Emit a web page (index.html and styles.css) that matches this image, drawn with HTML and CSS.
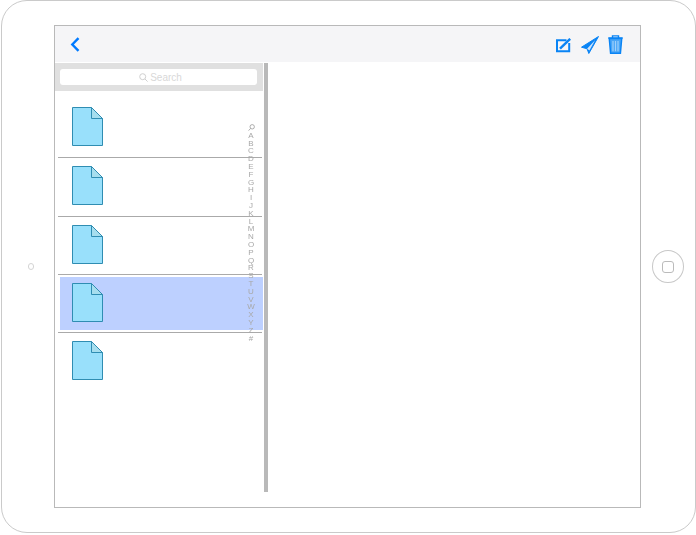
FILE: index.html
```html
<!DOCTYPE html>
<html lang="en">
<head>
<meta charset="utf-8">
<title>Notes</title>
<link rel="stylesheet" href="styles.css">
</head>
<body>
<svg class="sprite" aria-hidden="true">
  <symbol id="file" viewBox="0 0 31 39">
    <path class="file-body" d="M.5.5H19.5L30.5 11.5V38.5H.5Z"/>
    <path class="file-fold" d="M19.5 .5V11.5H30.5Z"/>
  </symbol>
</svg>
<div class="device">
  <div class="bezel-left"><span class="camera"></span></div>
  <main class="screen">
    <header class="toolbar">
      <svg class="icon-back" width="10" height="15" viewBox="0 0 10 15"><path d="M8.5 1.2 2.3 7.5l6.2 6.3"/></svg>
      <div class="actions">
        <svg class="icon-compose" width="15" height="15" viewBox="0 0 15 15">
          <path class="thin" d="M10.5 2.2H1V13.2H13.2V5"/>
          <path class="thick" d="M4 10.6 14.2 .8"/>
        </svg>
        <svg class="icon-send" width="18" height="18" viewBox="0 0 18 18">
          <path d="M17.5.5.5 11.2l5.6 1.6L7.8 17.5Z"/>
          <path class="plane-gap" d="M14.2 4 6.1 12.8l2.3 1.6Z"/>
        </svg>
        <svg class="icon-trash" width="15" height="19" viewBox="0 0 15 19">
          <path class="lid" d="M.3 3H14.7M4.5 2.6V.9H10.5V2.6"/>
          <path class="bin" d="M1.3 3.6 2.6 18.2H12.4L13.7 3.6Z"/>
          <path class="ribs" d="M5 6V16.2M7.5 6V16.2M10 6V16.2"/>
        </svg>
      </div>
    </header>
    <div class="content">
      <aside class="sidebar">
        <div class="search-bar">
          <div class="search-field">
            <svg class="icon-search" width="9" height="9" viewBox="0 0 9 9"><circle cx="3.7" cy="3.7" r="3"/><path d="m6 6 2.6 2.6"/></svg>
            <span>Search</span>
          </div>
        </div>
        <ul class="list">
          <li class="row row-tall"><div class="cell"><svg class="file" width="31" height="39"><use href="#file"/></svg></div><hr class="sep"></li>
          <li class="row row-tall"><div class="cell"><svg class="file" width="31" height="39"><use href="#file"/></svg></div><hr class="sep"></li>
          <li class="row"><div class="cell"><svg class="file" width="31" height="39"><use href="#file"/></svg></div><hr class="sep"></li>
          <li class="row"><div class="cell selected"><svg class="file" width="31" height="39"><use href="#file"/></svg></div><hr class="sep"></li>
          <li class="row"><div class="cell"><svg class="file" width="31" height="39"><use href="#file"/></svg></div></li>
        </ul>
        <ol class="index">
          <li><svg class="icon-index" width="7" height="7" viewBox="0 0 7 7"><circle cx="4.2" cy="2.8" r="2.2"/><path d="M2.6 4.4.6 6.6"/></svg></li>
          <li>A</li><li>B</li><li>C</li><li>D</li><li>E</li><li>F</li><li>G</li><li>H</li><li>I</li><li>J</li><li>K</li><li>L</li><li>M</li><li>N</li><li>O</li><li>P</li><li>Q</li><li>R</li><li>S</li><li>T</li><li>U</li><li>V</li><li>W</li><li>X</li><li>Y</li><li>Z</li><li>#</li>
        </ol>
      </aside>
      <div class="scrollbar"></div>
      <section class="detail"></section>
    </div>
  </main>
  <div class="bezel-right"><span class="home"><span class="home-square"></span></span></div>
</div>
</body>
</html>
```

FILE: styles.css
```css
* { box-sizing: border-box; }
html, body { margin: 0; padding: 0; background: #fff; }
body { width: 696px; height: 535px; overflow: hidden; font-family: "Liberation Sans", Arial, sans-serif; }
.sprite { display: none; }

.device {
  display: flex;
  align-items: center;
  width: 695px;
  height: 533px;
  margin-left: 1px;
  border: 1px solid #cacaca;
  border-radius: 26px;
}
.bezel-left { width: 52px; flex: none; display: flex; padding-left: 26px; }
.camera { width: 6px; height: 7px; border: 1px solid #d4d4d4; border-radius: 3px; }
.bezel-right { flex: 1; display: flex; justify-content: center; }
.home {
  width: 32px; height: 33px;
  border: 1px solid #c8c8c8;
  border-radius: 50%;
  display: flex; align-items: center; justify-content: center;
}
.home-square { width: 12px; height: 12px; border: 1px solid #bbb; border-radius: 3px; }

.screen {
  width: 587px;
  height: 483px;
  flex: none;
  align-self: flex-start;
  margin-top: 24px;
  border: 1px solid #b9b9b9;
  display: flex;
  flex-direction: column;
}
.toolbar {
  height: 36px;
  flex: none;
  background: #f5f5f7;
  display: flex;
  align-items: center;
  justify-content: space-between;
  padding: 0 17px 0 15px;
}
.actions { display: flex; align-items: center; gap: 9px; }
.icon-back path { fill: none; stroke: #007aff; stroke-width: 2.4; }
.icon-compose { margin-right: 1px; margin-top: 2px; }
.icon-compose path { fill: none; stroke: #0a84f5; }
.icon-compose .thin { stroke-width: 2; }
.icon-compose .thick { stroke-width: 2.4; }
.icon-send { margin-top: 1px; }
.icon-send path { fill: #0a84f5; stroke: #0a84f5; stroke-width: 1; stroke-linejoin: round; }
.icon-send .plane-gap { fill: #cfe4fb; stroke: none; }
.icon-trash path { fill: none; stroke: #0a84f5; }
.icon-trash .lid { stroke-width: 1.4; }
.icon-trash .bin { fill: #4aa6f7; stroke-width: 1.5; }
.icon-trash .ribs { stroke: #9fd0fb; stroke-width: 1.2; }

.content { flex: 1; display: flex; min-height: 0; padding-top: 1px; }
.sidebar { position: relative; width: 209px; flex: none; }
.search-bar { height: 28px; margin-right: 1px; background: #e0e0e0; padding: 6px 6px 0 5px; }
.search-field {
  height: 16px;
  background: #fff;
  border-radius: 3px;
  display: flex;
  align-items: center;
  justify-content: center;
  gap: 2px;
  font-size: 10px;
  color: #d8d8d8;
  padding-left: 4px;
}
.icon-search circle, .icon-search path { fill: none; stroke: #d0d0d0; stroke-width: 1; }

.list { list-style: none; margin: 0; padding: 8px 0 0; }
.row { height: 58px; padding-top: 2px; }
.row-tall { height: 59px; }
.cell { height: 53px; margin: 0 1px 0 5px; padding: 6px 0 0 12px; }
.row-tall .cell { height: 54px; }
.selected { background: #bdd0ff; }
.file { display: block; }
.file-body { fill: #99e0fb; stroke: #2f8db2; }
.file-fold { fill: #a6deee; stroke: #2f8db2; }
.sep {
  height: 1px;
  margin: 2px 2px 0 3px;
  border: 0;
  background: #aaa;
}
.index {
  position: absolute;
  top: 61px;
  left: 188px;
  width: 16px;
  margin: 0;
  padding: 0;
  list-style: none;
  font-size: 8px;
  color: #a8a8a8;
  text-align: center;
  will-change: transform;
}
.index li { height: 7.8px; line-height: 7.8px; }
.icon-index { display: block; margin: 0 auto; }
.icon-index circle, .icon-index path { fill: none; stroke: #999; stroke-width: .8; }
.scrollbar { width: 4px; height: 429px; flex: none; background: #b9b9b9; }
.detail { flex: 1; background: #fff; }
```
